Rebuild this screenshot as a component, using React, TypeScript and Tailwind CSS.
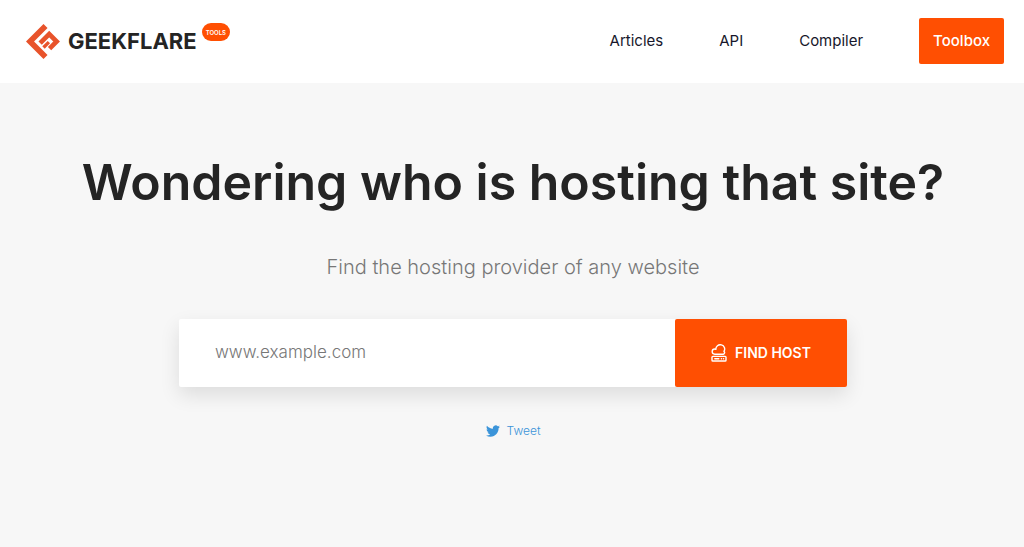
import React from "react";

const navLinks = [
  { name: "Articles", href: "#articles" },
  { name: "API", href: "#api" },
  { name: "Compiler", href: "#compiler" },
];

const LogoMark = () => (
  <svg
    viewBox="0 0 104 104"
    className="h-[35px] w-[35px]"
    fill="none"
    stroke="#e8532b"
    strokeWidth="14"
    aria-hidden="true"
  >
    <path d="M58 6 L12 52 L58 98" strokeWidth="17" />
    <path d="M42 57 L69 30 L91 52 L70 73" />
    <path d="M52 70 L68 54" strokeWidth="10" />
  </svg>
);

const HostIcon = () => (
  <svg
    viewBox="0 0 16 18"
    className="h-[18px] w-4"
    fill="none"
    stroke="currentColor"
    strokeWidth="1.4"
    strokeLinecap="round"
    strokeLinejoin="round"
    aria-hidden="true"
  >
    <path d="M3.8 10.2 a2.6 2.6 0 0 1 0 -5.2 q.6 0 1.1 .3 a4.4 4.2 0 1 1 8 2 a1.6 1.6 0 0 1 -.6 2.9 z" />
    <rect x="1" y="12.4" width="14" height="4.6" rx="0.8" />
    <path d="M3.8 14.7 h4 M10.4 14.7 h.1 M12.5 14.7 h.1" />
  </svg>
);

const TwitterIcon = () => (
  <svg
    viewBox="0 0 24 24"
    className="h-[14px] w-[14px]"
    fill="#3b94d9"
    aria-hidden="true"
  >
    <path d="M23.95 4.57a10 10 0 0 1-2.82.77 4.96 4.96 0 0 0 2.16-2.72c-.95.55-2 .96-3.13 1.18a4.92 4.92 0 0 0-8.38 4.48C7.69 8.1 4.07 6.13 1.64 3.16a4.82 4.82 0 0 0-.67 2.48c0 1.71.87 3.21 2.19 4.1a4.9 4.9 0 0 1-2.23-.62v.06a4.92 4.92 0 0 0 3.95 4.83 5 5 0 0 1-2.21.08 4.94 4.94 0 0 0 4.6 3.42A9.87 9.87 0 0 1 0 19.54a14 14 0 0 0 7.55 2.21c9.05 0 14-7.5 14-13.98 0-.21 0-.42-.02-.63a9.94 9.94 0 0 0 2.46-2.55z" />
  </svg>
);

const Header = () => (
  <header className="flex h-[83px] items-center justify-between bg-white pr-5 pb-px pl-[26px]">
    <a href="#home" className="flex items-center">
      <LogoMark />
      <span className="ml-[7px] text-[22px] font-bold text-[#242424]">
        GEEKFLARE
      </span>
      <span className="mb-[18px] ml-[5px] flex h-[18px] items-center rounded-full bg-[#ff4f02] px-1 text-[6px] font-semibold text-white">
        TOOLS
      </span>
    </a>

    <nav className="flex items-center gap-14 text-[15px] text-[#17172b]">
      {navLinks.map((link) => (
        <a key={link.name} href={link.href} className="hover:text-[#ff4f02]">
          {link.name}
        </a>
      ))}
      <a
        href="#toolbox"
        className="flex h-[46px] items-center rounded-xs bg-[#ff4f02] px-[14px] font-medium text-white"
      >
        Toolbox
      </a>
    </nav>
  </header>
);

const HostForm = () => (
  <form
    className="mt-9 flex h-[68px] w-full max-w-[668px] rounded-xs bg-white shadow-[0_8px_20px_rgba(0,0,0,0.11)]"
    onSubmit={(e) => e.preventDefault()}
  >
    <input
      type="text"
      aria-label="Website address"
      placeholder="www.example.com"
      className="min-w-0 flex-1 px-9 text-[17px] font-light text-[#242424] outline-none placeholder:text-[#777777]"
    />
    <button
      type="submit"
      className="flex w-[172px] items-center justify-center gap-2 rounded-xs bg-[#ff4f02] text-sm font-semibold text-white"
    >
      <HostIcon />
      FIND HOST
    </button>
  </form>
);

const App: React.FC = () => {
  return (
    <div className="flex min-h-screen flex-col bg-[#f7f7f7] font-['Inter',sans-serif]">
      <Header />
      <main className="flex flex-1 flex-col items-center pt-[68px] pr-6 pl-[26px]">
        <h1 className="text-center text-[50px] leading-[62px] font-semibold text-[#242424]">
          Wondering who is hosting that site?
        </h1>
        <p className="mt-[38px] text-center text-xl leading-8 font-light text-[#777777]">
          Find the hosting provider of any website
        </p>
        <HostForm />
        <a
          href="#tweet"
          className="mt-9 flex items-center gap-[7px] text-xs font-light text-[#3b94d9]"
        >
          <TwitterIcon />
          Tweet
        </a>
      </main>
    </div>
  );
};

export default App;
